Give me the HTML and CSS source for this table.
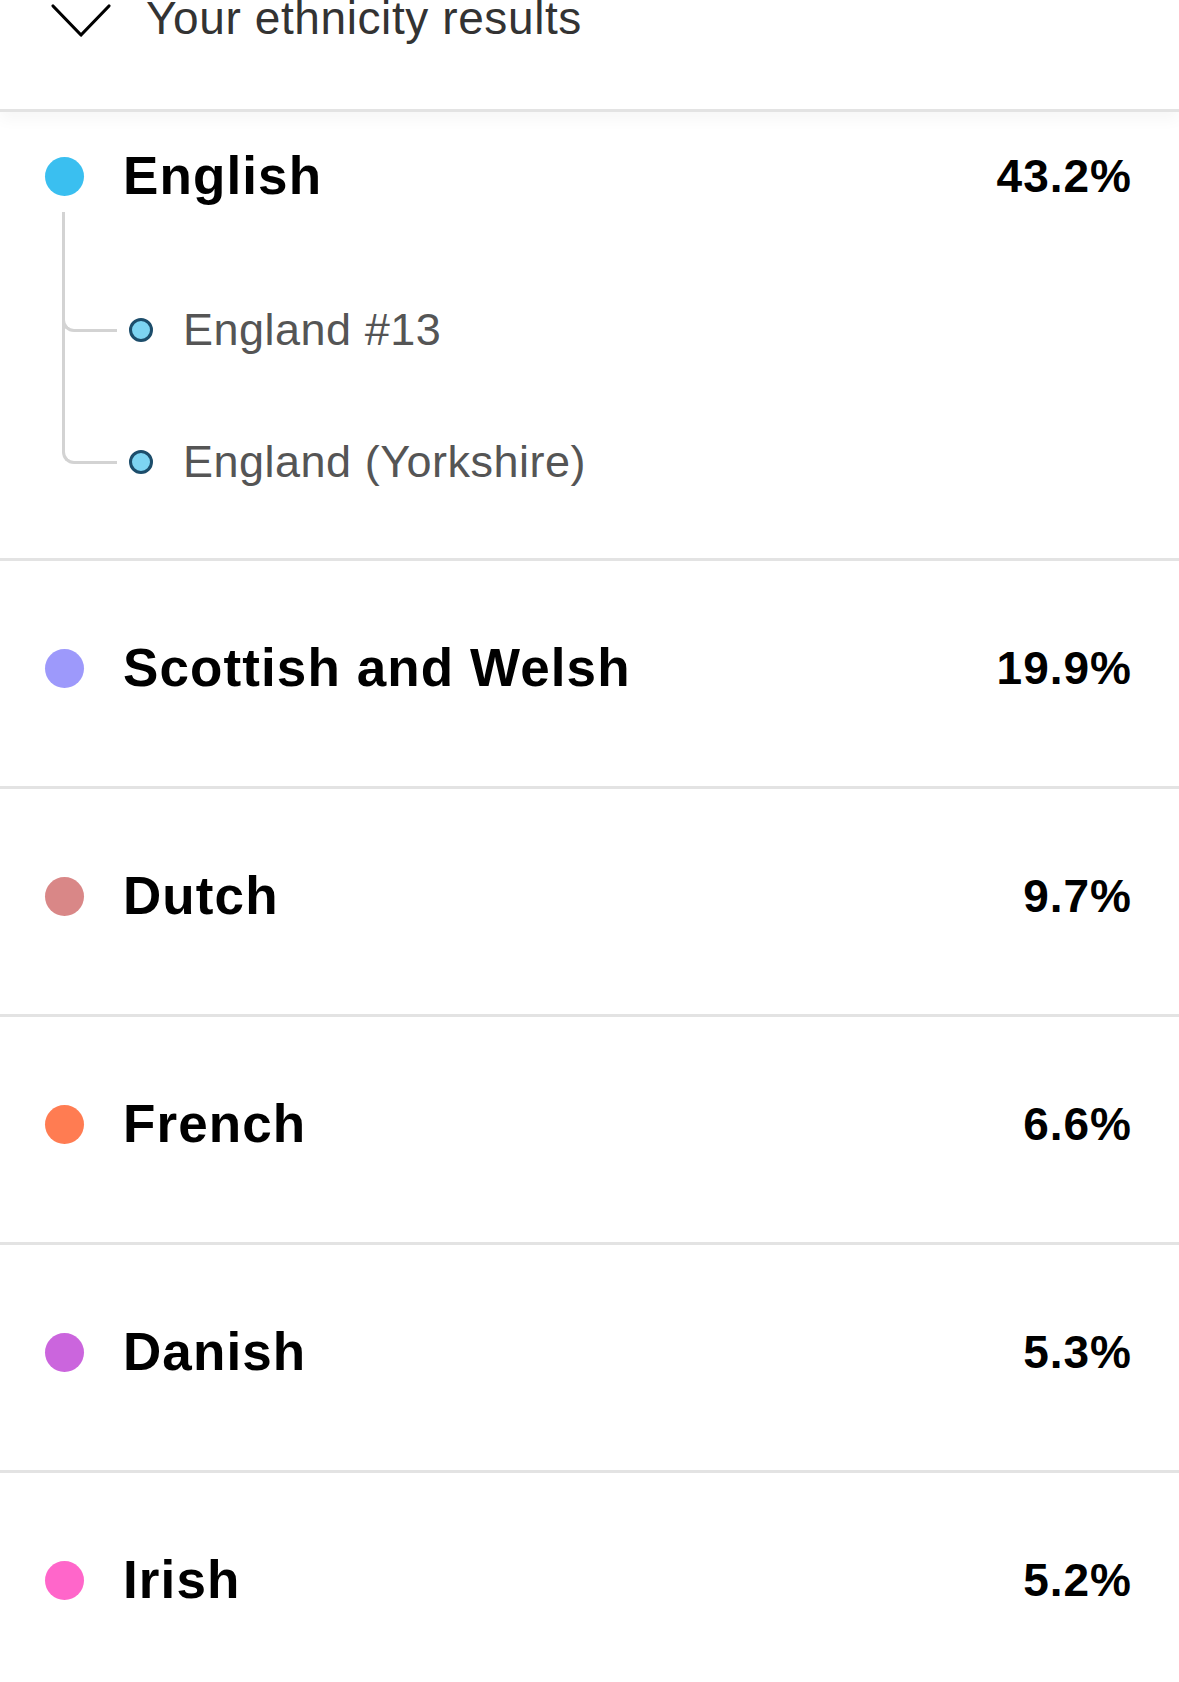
FILE: index.html
```html
<!DOCTYPE html>
<html lang="en">
<head>
<meta charset="utf-8">
<title>Your ethnicity results</title>
<link rel="stylesheet" href="styles.css">
</head>
<body>
<header class="header">
  <svg class="chevron" width="62" height="36" viewBox="0 0 62 36" aria-hidden="true">
    <path d="M3 3 L31 32 L59 3" fill="none" stroke="#000" stroke-width="3.2" stroke-linecap="round" stroke-linejoin="round"/>
  </svg>
  <span class="header-title">Your ethnicity results</span>
</header>

<ul class="list">
  <li class="row row-expanded">
    <div class="row-head">
      <span class="dot dot-english"></span>
      <span class="name">English</span>
      <span class="pct">43.2%</span>
    </div>
    <ul class="sub-list">
      <li class="sub sub-first"><span class="sub-dot"></span><span class="sub-name">England #13</span></li>
      <li class="sub sub-second"><span class="sub-dot"></span><span class="sub-name">England (Yorkshire)</span></li>
    </ul>
  </li>
  <li class="row">
    <div class="row-head">
      <span class="dot dot-scottish"></span>
      <span class="name">Scottish and Welsh</span>
      <span class="pct">19.9%</span>
    </div>
  </li>
  <li class="row">
    <div class="row-head">
      <span class="dot dot-dutch"></span>
      <span class="name">Dutch</span>
      <span class="pct">9.7%</span>
    </div>
  </li>
  <li class="row">
    <div class="row-head">
      <span class="dot dot-french"></span>
      <span class="name">French</span>
      <span class="pct">6.6%</span>
    </div>
  </li>
  <li class="row">
    <div class="row-head">
      <span class="dot dot-danish"></span>
      <span class="name">Danish</span>
      <span class="pct">5.3%</span>
    </div>
  </li>
  <li class="row">
    <div class="row-head">
      <span class="dot dot-irish"></span>
      <span class="name">Irish</span>
      <span class="pct">5.2%</span>
    </div>
  </li>
</ul>
</body>
</html>
```

FILE: styles.css
```css
html, body {
  margin: 0;
  padding: 0;
  background: #fff;
}

body {
  font-family: "Liberation Sans", Arial, Helvetica, sans-serif;
  color: #000;
  overflow: hidden;
}

.header {
  display: flex;
  align-items: flex-start;
  height: 109px;
  padding-left: 50px;
  border-bottom: 3px solid #e3e3e3;
  box-shadow: 0 8px 14px rgba(0, 0, 0, 0.035);
}

.chevron {
  display: block;
  margin-top: 3px;
  flex: none;
}

.header-title {
  margin-left: 34px;
  font-size: 46px;
  line-height: 36px;
  letter-spacing: 0.6px;
  color: #333;
  white-space: nowrap;
}

.list {
  list-style: none;
  margin: 0;
  padding: 0;
}

.row {
  padding: 77px 48px 88px 45px;
  border-bottom: 3px solid #e3e3e3;
}

.row-expanded {
  padding-top: 34px;
  padding-bottom: 71px;
}

.row-head {
  display: flex;
  align-items: center;
  height: 60px;
}

.dot {
  flex: none;
  width: 39px;
  height: 39px;
  border-radius: 50%;
}

.dot-english { background: #3abff0; }
.dot-scottish { background: #9d99fb; }
.dot-dutch { background: #d98787; }
.dot-french { background: #ff7c52; }
.dot-danish { background: #cb65dd; }
.dot-irish { background: #ff66ca; }

.name {
  margin-left: 39px;
  font-size: 53px;
  font-weight: 700;
  line-height: 60px;
  letter-spacing: 1.1px;
  white-space: nowrap;
}

.pct {
  margin-left: auto;
  margin-right: -1px;
  font-size: 46px;
  font-weight: 700;
  line-height: 60px;
  letter-spacing: 1px;
}

.sub-list {
  list-style: none;
  margin: 99px 0 0 0;
  padding: 0;
  display: flex;
  flex-direction: column;
  gap: 82px;
}

.sub {
  position: relative;
  display: flex;
  align-items: center;
  height: 50px;
  padding-left: 84px;
}

.sub::before {
  content: "";
  position: absolute;
  left: 17px;
  width: 55px;
  border-left: 3px solid #d3d3d3;
  border-bottom: 3px solid #d3d3d3;
  border-bottom-left-radius: 12px;
  box-sizing: border-box;
}

.sub-first::before {
  top: -93px;
  height: 120px;
}

.sub-second::before {
  top: -225px;
  height: 252px;
}

.sub-dot {
  flex: none;
  width: 24px;
  height: 24px;
  box-sizing: border-box;
  border-radius: 50%;
  background: #7dd4f2;
  border: 3px solid #1c4d6b;
}

.sub-name {
  margin-left: 30px;
  font-size: 45px;
  line-height: 50px;
  letter-spacing: 0.5px;
  color: #555;
  white-space: nowrap;
}
```
